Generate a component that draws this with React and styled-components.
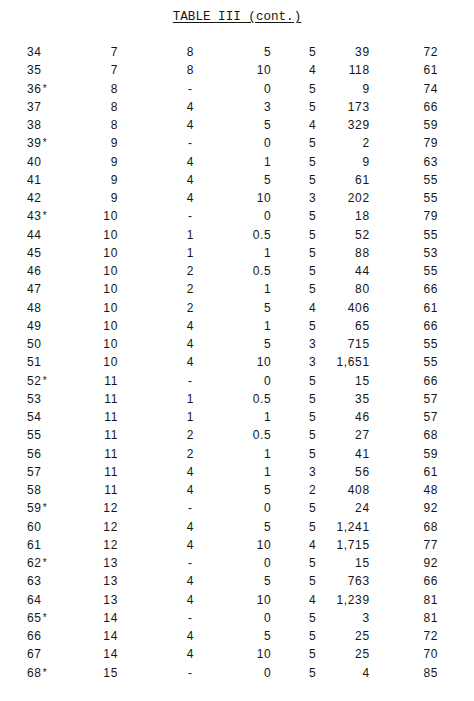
import React from "react";
import styled, { createGlobalStyle } from "styled-components";

const rows = [
  ["34", "7", "8", "5", "5", "39", "72"],
  ["35", "7", "8", "10", "4", "118", "61"],
  ["36*", "8", "-", "0", "5", "9", "74"],
  ["37", "8", "4", "3", "5", "173", "66"],
  ["38", "8", "4", "5", "4", "329", "59"],
  ["39*", "9", "-", "0", "5", "2", "79"],
  ["40", "9", "4", "1", "5", "9", "63"],
  ["41", "9", "4", "5", "5", "61", "55"],
  ["42", "9", "4", "10", "3", "202", "55"],
  ["43*", "10", "-", "0", "5", "18", "79"],
  ["44", "10", "1", "0.5", "5", "52", "55"],
  ["45", "10", "1", "1", "5", "88", "53"],
  ["46", "10", "2", "0.5", "5", "44", "55"],
  ["47", "10", "2", "1", "5", "80", "66"],
  ["48", "10", "2", "5", "4", "406", "61"],
  ["49", "10", "4", "1", "5", "65", "66"],
  ["50", "10", "4", "5", "3", "715", "55"],
  ["51", "10", "4", "10", "3", "1,651", "55"],
  ["52*", "11", "-", "0", "5", "15", "66"],
  ["53", "11", "1", "0.5", "5", "35", "57"],
  ["54", "11", "1", "1", "5", "46", "57"],
  ["55", "11", "2", "0.5", "5", "27", "68"],
  ["56", "11", "2", "1", "5", "41", "59"],
  ["57", "11", "4", "1", "3", "56", "61"],
  ["58", "11", "4", "5", "2", "408", "48"],
  ["59*", "12", "-", "0", "5", "24", "92"],
  ["60", "12", "4", "5", "5", "1,241", "68"],
  ["61", "12", "4", "10", "4", "1,715", "77"],
  ["62*", "13", "-", "0", "5", "15", "92"],
  ["63", "13", "4", "5", "5", "763", "66"],
  ["64", "13", "4", "10", "4", "1,239", "81"],
  ["65*", "14", "-", "0", "5", "3", "81"],
  ["66", "14", "4", "5", "5", "25", "72"],
  ["67", "14", "4", "10", "5", "25", "70"],
  ["68*", "15", "-", "0", "5", "4", "85"],
];

// width, alignment and left padding of each column
const columns = [
  { w: 63, align: "left", pl: 0 },
  { w: 28, align: "right", pl: 0 },
  { w: 113, align: "center", pl: 33 },
  { w: 41, align: "right", pl: 0 },
  { w: 60, align: "center", pl: 24 },
  { w: 39, align: "right", pl: 0 },
  { w: 69, align: "right", pl: 0 },
];

const GlobalStyle = createGlobalStyle`
  body {
    margin: 0;
    background: #fff;
    color: #161616;
  }
`;

const Page = styled.div`
  display: flex;
  flex-direction: column;
  width: 474px;
  min-height: 701px;
  padding: 9px 0 0 27px;
  box-sizing: border-box;
`;

const Title = styled.h1`
  margin: 0 0 18px;
  padding-right: 27px;
  font-family: "Liberation Mono", "DejaVu Sans Mono", monospace;
  font-size: 12.6px;
  font-weight: normal;
  line-height: 16px;
  text-align: center;
  text-decoration: underline;
  text-underline-offset: 2px;
`;

const Row = styled.div`
  display: flex;
  height: 18.26px;
  align-items: center;
  font-family: "Liberation Sans", Arial, sans-serif;
  font-size: 12px;
  letter-spacing: 0.65px;
  font-variant-numeric: tabular-nums;
`;

const Cell = styled.div`
  flex: 0 0 ${(p) => p.$w}px;
  padding-left: ${(p) => p.$pl}px;
  margin-right: ${(p) => (p.$align === "right" ? -0.65 : 0)}px;
  box-sizing: border-box;
  text-align: ${(p) => p.$align};
  white-space: nowrap;
`;

const Star = styled.span`
  font-size: 10px;
  vertical-align: 1px;
  margin-left: 1px;
`;

const App = () => {
  return (
    <>
      <GlobalStyle />
      <Page>
        <Title>TABLE III (cont.)</Title>
        {rows.map((row) => (
          <Row key={row[0]}>
            {row.map((value, i) => (
              <Cell
                key={i}
                $w={columns[i].w}
                $align={columns[i].align}
                $pl={columns[i].pl}
              >
                {value.endsWith("*") ? (
                  <>
                    {value.slice(0, -1)}
                    <Star>*</Star>
                  </>
                ) : (
                  value
                )}
              </Cell>
            ))}
          </Row>
        ))}
      </Page>
    </>
  );
};

export default App;
